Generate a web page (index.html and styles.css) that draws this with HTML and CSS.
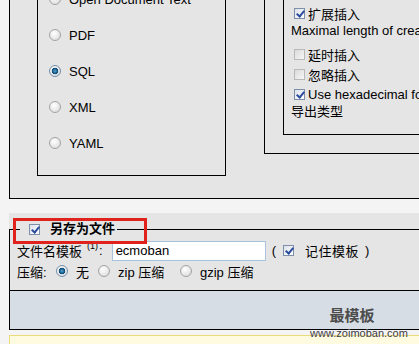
FILE: index.html
```html
<!DOCTYPE html>
<html lang="zh-CN">

<head>
    <meta charset="UTF-8">
    <meta name="viewport" content="width=device-width, initial-scale=1.0">
    <title>导出</title>
    <link rel="stylesheet" href="styles.css">
</head>

<body>
    <div class="page">
        <div class="export">
            <div class="formats">
                <ul class="format-list">
                    <li><input type="radio" name="fmt"><span>Open Document Text</span></li>
                    <li><input type="radio" name="fmt"><span>PDF</span></li>
                    <li><input type="radio" name="fmt" checked><span>SQL</span></li>
                    <li><input type="radio" name="fmt"><span>XML</span></li>
                    <li><input type="radio" name="fmt"><span>YAML</span></li>
                </ul>
            </div>
            <div class="options">
                <div class="sql-opts">
                    <div class="opt"><input type="checkbox" checked><span>扩展插入</span></div>
                    <div class="note spaced">Maximal length of created query</div>
                    <div class="opt"><input type="checkbox"><span>延时插入</span></div>
                    <div class="opt"><input type="checkbox"><span>忽略插入</span></div>
                    <div class="opt"><input type="checkbox" checked><span>Use hexadecimal for binary fields</span></div>
                    <div class="note">导出类型</div>
                </div>
            </div>
        </div>

        <form class="save">
            <fieldset class="save-box">
                <legend><input type="checkbox" checked>另存为文件</legend>
                <div class="row">
                    <span>文件名模板</span>
                    <sup class="ref">(1)</sup>
                    <span class="colon">:</span>
                    <input type="text" class="filename" value="ecmoban">
                    <span class="paren">(</span>
                    <input type="checkbox" class="remember" checked>
                    <span class="remember-text">记住模板</span>
                    <span class="paren">)</span>
                </div>
                <div class="row">
                    <span class="comp-label">压缩:</span>
                    <span class="choice none"><input type="radio" name="comp" checked><span>无</span></span>
                    <span class="choice zip"><input type="radio" name="comp"><span>zip 压缩</span></span>
                    <span class="choice"><input type="radio" name="comp"><span>gzip 压缩</span></span>
                </div>
            </fieldset>
            <div class="footer"></div>
            <div class="mark"></div>
            <div class="watermark">
                <div class="wm-logo">最模板</div>
                <div class="wm-url">www.zoimoban.com</div>
            </div>
        </form>

        <div class="notice"></div>
    </div>
</body>

</html>
```

FILE: styles.css
```css
* {
    box-sizing: border-box;
}

body {
    margin: 0;
    overflow: hidden;
    background: #f4f4f4;
    color: #000;
    font-family: "Liberation Sans", "Noto Sans CJK SC", sans-serif;
    font-size: 13px;
}

/* form controls */
input[type="radio"] {
    appearance: none;
    flex: none;
    width: 12px;
    height: 12px;
    margin: 0;
    border: 1px solid #a2a2a2;
    border-radius: 50%;
    background: radial-gradient(circle at 40% 35%, #fff, #d6d6d6);
}

input[type="radio"]:checked {
    border-color: #7390ad;
    background: radial-gradient(circle at 50% 50%, #5aa3cf 0, #1c6797 2px, #0d4670 3px, transparent 3.6px),
        radial-gradient(circle at 40% 35%, #fff, #d6d6d6);
}

input[type="checkbox"] {
    appearance: none;
    flex: none;
    position: relative;
    width: 11px;
    height: 11px;
    margin: 0;
    border: 1px solid #b9b9b9;
    background: linear-gradient(135deg, #dadada, #f7f7f7);
}

input[type="checkbox"]:checked {
    border-color: #7c8ea8;
    background: linear-gradient(135deg, #dde2ea, #fff);
}

input[type="checkbox"]:checked::after {
    content: "";
    position: absolute;
    left: 3px;
    top: 0;
    width: 3px;
    height: 6px;
    border: solid #2b4b9c;
    border-width: 0 2px 2px 0;
    transform: rotate(40deg);
}

.page {
    width: 640px;
}

/* top export options */
.export {
    margin: -40px 0 0 9px;
    border: 1px solid #000;
    border-right: none;
    background: #e5e5e5;
    padding: 0 0 22px 27px;
    display: flex;
    align-items: flex-start;
}

.formats {
    width: 189px;
    margin-top: 9px;
    border: 1px solid #000;
    padding: 10px 0 14px 11px;
}

.format-list {
    list-style: none;
    margin: 0;
    padding: 0;
}

.format-list li {
    height: 36px;
    display: flex;
    align-items: center;
    gap: 8px;
    white-space: nowrap;
}

.options {
    flex: 1;
    margin: 9px 0 0 38px;
    border: 1px solid #000;
    border-right: none;
    padding: 5px 0 18px 18px;
}

.sql-opts {
    border: 1px solid #000;
    border-right: none;
    padding: 26px 0 14px 7px;
    white-space: nowrap;
}

.opt {
    height: 20px;
    display: flex;
    align-items: center;
}

.opt input[type="checkbox"] {
    margin: 0 3px 0 3px;
}

.note {
    height: 16px;
    line-height: 16px;
}

.note.spaced {
    margin-bottom: 5px;
}

/* save as file */
.save {
    position: relative;
    margin: 14px 0 0 9px;
    padding-top: 7px;
    background: #e5e5e5;
}

.save-box {
    margin: 0;
    min-width: 0;
    border: 1px solid #000;
    border-right: none;
    padding: 2px 7px 9px;
}

.save-box legend {
    margin-left: 3px;
    padding: 0 2px;
    height: 18px;
    line-height: 18px;
    font-weight: bold;
    display: flex;
    align-items: center;
}

.save-box legend input[type="checkbox"] {
    margin: 0 10px 0 7px;
}

.row {
    display: flex;
    align-items: center;
    height: 20px;
    white-space: nowrap;
}

.row:first-of-type {
    height: 21px;
}

.ref {
    font-size: 9px;
    margin: 0 0 0 5px;
    position: relative;
    top: -5px;
    vertical-align: baseline;
}

.colon {
    margin-left: 1px;
}

.filename {
    margin: 0 0 0 9px;
    width: 154px;
    height: 20px;
    border: 1px solid #a9c3dd;
    background: #fff;
    padding: 0 3px;
    font-family: "Liberation Sans", sans-serif;
    font-size: 13px;
}

.paren {
    margin-left: 6px;
}

.row input.remember {
    margin-left: 7px;
}

.remember-text {
    margin-left: 11px;
    letter-spacing: 0.5px;
}

.comp-label {
    width: 39px;
}

.choice {
    display: inline-flex;
    align-items: center;
    gap: 8px;
}

.choice.none {
    width: 42px;
}

.choice.zip {
    width: 82px;
}

.footer {
    height: 39px;
    border: 1px solid #000;
    border-top: none;
    border-right: none;
    background: #d6dde4;
}

/* annotation box drawn over the legend */
.mark {
    position: absolute;
    left: 4px;
    top: 5px;
    width: 134px;
    height: 26px;
    border: 3px solid #e0221d;
}

.watermark {
    position: absolute;
    left: 300px;
    top: 94px;
    width: 100px;
    text-align: center;
    color: #4d4d4d;
}

.wm-logo {
    font-size: 15px;
    font-weight: bold;
    line-height: 18px;
    margin-right: 14px;
}

.wm-url {
    font-size: 11px;
    line-height: 12px;
    margin-top: 2px;
    color: #3a3a3a;
    text-shadow: 0 0 1px #fff;
}

.notice {
    margin: 5px 0 0 9px;
    height: 40px;
    border: 1px solid #eadc78;
    border-right: none;
    background: #fffbe0;
}
```
